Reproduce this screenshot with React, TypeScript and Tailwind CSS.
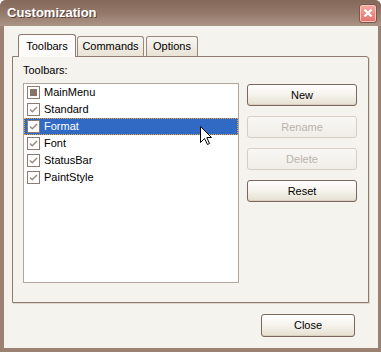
import React from "react";

type Row = { name: string; state: "mixed" | "checked"; selected?: boolean };

const rows: Row[] = [
  { name: "MainMenu", state: "mixed" },
  { name: "Standard", state: "checked" },
  { name: "Format", state: "checked", selected: true },
  { name: "Font", state: "checked" },
  { name: "StatusBar", state: "checked" },
  { name: "PaintStyle", state: "checked" },
];

const CheckBox = ({ state }: { state: Row["state"] }) => (
  <div className="w-[13px] h-[13px] shrink-0 border border-[#8c7b70] bg-white flex items-center justify-center">
    {state === "mixed" ? (
      <div className="w-[7px] h-[7px] bg-[#8a7366]" />
    ) : (
      <svg width="11" height="11" viewBox="0 0 11 11">
        <path d="M2 5.5 L4.3 7.8 L9 3" fill="none" stroke="#9a8a7e" strokeWidth="1.4" />
      </svg>
    )}
  </div>
);

const XpButton = ({
  label,
  disabled,
  className = "",
}: {
  label: string;
  disabled?: boolean;
  className?: string;
}) => (
  <div
    className={`flex items-center justify-center rounded-[3px] border text-[11px] ${
      disabled
        ? "border-[#d6cec5] text-[#b9b3ab] bg-gradient-to-b from-[#f8f7f4] to-[#f0ede7]"
        : "border-[#7b675b] text-black bg-gradient-to-b from-white via-[#f6f3ec] to-[#e6dfd1] shadow-[inset_0_-1px_0_#d8cfbf]"
    } ${className}`}
  >
    {label}
  </div>
);

// arrow cursor sitting over the list
const Cursor = () => (
  <svg width="13" height="20" viewBox="0 0 13 20" className="absolute left-[176px] top-[42px]">
    <path
      d="M0.5 0.5 L0.5 16.5 L4.5 12.5 L7.5 18.5 L9.5 17.5 L6.8 11.5 L11.5 11.5 Z"
      fill="white"
      stroke="black"
      strokeWidth="1"
    />
  </svg>
);

export default function App() {
  return (
    <div
      className="w-[381px] h-[352px] flex flex-col bg-[#9b8172] rounded-t-[6px] overflow-hidden"
      style={{ fontFamily: '"Liberation Sans", Arial, sans-serif' }}
    >
      {/* Title bar */}
      <div className="h-[26px] shrink-0 flex items-center justify-between pl-[7px] pr-[4px] bg-gradient-to-b from-[#84685a] via-[#94796a] to-[#ab9486]">
        <span className="text-white font-bold text-[13px] [text-shadow:1px_1px_0_#5a4336]">
          Customization
        </span>
        <div className="w-[18px] h-[19px] rounded-[3px] border border-[#7a574e] bg-gradient-to-b from-[#f7aaa4] to-[#e56f68] flex items-center justify-center shadow-[inset_0_0_0_1px_#f9c3be]">
          <svg width="10" height="10" viewBox="0 0 10 10">
            <path d="M1.5 1.5 L8.5 8.5 M8.5 1.5 L1.5 8.5" stroke="white" strokeWidth="2.2" />
          </svg>
        </div>
      </div>

      {/* Body */}
      <div className="flex-1 ml-[4px] mr-[3px] mb-[4px] bg-[#f5f3ee] flex flex-col pt-[8px]">
        {/* Tabs */}
        <div className="flex items-end ml-[14px] h-[22px] text-[11px] text-black">
          <div className="relative z-10 -mb-px w-[58px] h-[23px] rounded-t-[3px] border border-b-0 border-[#8f7b6e] bg-[#fcfbf9] flex items-center justify-center">
            Toolbars
          </div>
          <div className="ml-[1px] w-[67px] h-[20px] rounded-t-[3px] border border-b-0 border-[#9b887b] bg-gradient-to-b from-[#f8f6f2] to-[#e9e3d6] flex items-center justify-center">
            Commands
          </div>
          <div className="ml-[2px] w-[52px] h-[20px] rounded-t-[3px] border border-b-0 border-[#9b887b] bg-gradient-to-b from-[#f8f6f2] to-[#e9e3d6] flex items-center justify-center">
            Options
          </div>
        </div>

        {/* Tab panel */}
        <div className="ml-[8px] mr-[9px] h-[247px] border border-[#8f7b6e] rounded-tr-[3px] bg-[#f5f3ee] shadow-[1px_1px_0_#e0d8cc] flex px-[10px]">
          <div className="w-[216px] flex flex-col">
            <div className="mt-[6px] h-[14px] leading-[14px] text-[11px] text-black">Toolbars:</div>
            <div className="relative mt-[6px] h-[200px] border border-[#b3a79d] bg-white text-[11px]">
              {rows.map((r) => (
                <div
                  key={r.name}
                  className={`h-[17px] flex items-center gap-[4px] ${
                    r.selected
                      ? "bg-[#316ac5] text-white border border-dotted border-[#eba33b] pl-[2px]"
                      : "text-black pl-[3px]"
                  }`}
                >
                  <CheckBox state={r.state} />
                  <span>{r.name}</span>
                </div>
              ))}
              <Cursor />
            </div>
          </div>

          <div className="ml-[8px] pt-[27px] flex flex-col gap-[10px]">
            <XpButton label="New" className="w-[110px] h-[22px]" />
            <XpButton label="Rename" disabled className="w-[110px] h-[22px]" />
            <XpButton label="Delete" disabled className="w-[110px] h-[22px]" />
            <XpButton label="Reset" className="w-[110px] h-[22px]" />
          </div>
        </div>

        {/* Footer */}
        <div className="flex justify-end mt-[11px] mr-[23px]">
          <XpButton label="Close" className="w-[94px] h-[23px]" />
        </div>
      </div>
    </div>
  );
}
